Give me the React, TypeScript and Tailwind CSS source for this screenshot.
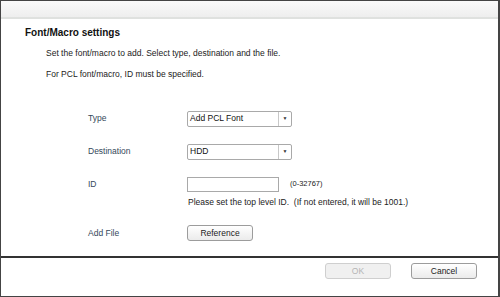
import React from 'react';

function Select({ value }: { value: string }) {
  return (
    <div className="flex h-[16px] w-[105px] items-stretch rounded-[2px] border border-[#a9a9a9] bg-white">
      <div className="flex flex-1 items-center pl-[2px] text-[8.5px] text-[#111]">{value}</div>
      <div className="flex w-[13px] items-center justify-center border-l border-[#c8c8c8]">
        <span className="text-[5px] leading-none text-[#333]">▼</span>
      </div>
    </div>
  );
}

function Button({ label, disabled }: { label: string; disabled?: boolean }) {
  return (
    <button
      className={`h-[16px] w-[66px] rounded-[3px] border text-[8.5px] leading-none ${
        disabled
          ? 'border-[#cfcfcf] bg-[#f0f0f0] text-[#b5b5b5]'
          : 'border-[#9c9c9c] bg-gradient-to-b from-white to-[#ebebeb] text-[#222]'
      }`}
    >
      {label}
    </button>
  );
}

export default function App() {
  return (
    <div className="flex h-[297px] w-[500px] flex-col border border-r-2 border-[#444] bg-white font-['Liberation_Sans',Arial,sans-serif]">
      {/* title strip */}
      <div className="h-[18px] shrink-0 border-b-2 border-[#dfe1df] bg-gradient-to-b from-[#fafafa] to-[#eeeeee]" />

      <div className="flex-1 pl-[24px] pt-[6px]">
        <h2 className="text-[10px] font-bold text-[#111]">Font/Macro settings</h2>
        <p className="ml-[21px] mt-[7px] text-[8.5px] text-[#222]">
          Set the font/macro to add. Select type, destination and the file.
        </p>
        <p className="ml-[21px] mt-[8px] text-[8.5px] text-[#222]">For PCL font/macro, ID must be specified.</p>

        <div className="ml-[63px] mt-[30px] grid grid-cols-[99px_1fr] items-center gap-y-[17px] text-[8.5px] text-[#34485a]">
          <span>Type</span>
          <Select value="Add PCL Font" />
          <span>Destination</span>
          <Select value="HDD" />
          <span>ID</span>
          <div className="flex items-center">
            <div className="h-[15px] w-[92px] border border-[#a9a9a9] bg-white" />
            <span className="ml-[11px] text-[7.5px] text-[#222]">(0-32767)</span>
          </div>
        </div>
        <p className="ml-[163px] mt-[4px] text-[8.5px] text-[#222]">
          Please set the top level ID.&nbsp; (If not entered, it will be 1001.)
        </p>
        <div className="ml-[63px] mt-[17px] grid grid-cols-[99px_1fr] items-center text-[8.5px] text-[#34485a]">
          <span>Add File</span>
          <Button label="Reference" />
        </div>
      </div>

      <div className="flex h-[40px] shrink-0 items-start justify-end gap-[20px] border-t-2 border-[#333] pr-[21px] pt-[5px]">
        <Button label="OK" disabled />
        <Button label="Cancel" />
      </div>
    </div>
  );
}
